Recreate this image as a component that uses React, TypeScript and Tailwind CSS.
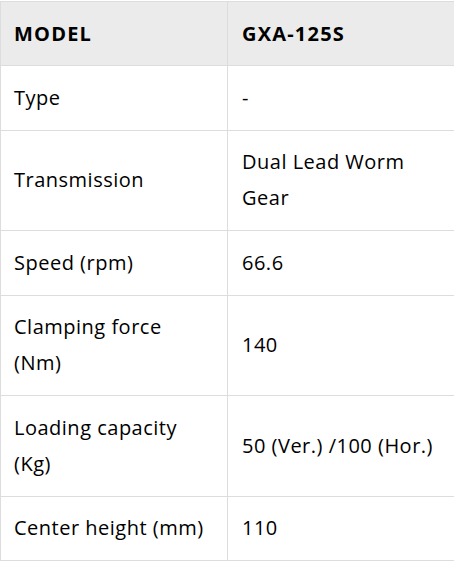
import React from "react";

const rows: [string, string][] = [
  ["Type", "-"],
  ["Transmission", "Dual Lead Worm Gear"],
  ["Speed (rpm)", "66.6"],
  ["Clamping force (Nm)", "140"],
  ["Loading capacity (Kg)", "50 (Ver.) /100 (Hor.)"],
  ["Center height (mm)", "110"],
];

export default function App() {
  return (
    <div
      className="w-[454px] h-[562px] overflow-hidden bg-white pt-px text-[#000]"
      style={{ fontFamily: '"Open Sans", "Noto Sans", sans-serif' }}
    >
      <table className="w-[460px] border-collapse table-fixed text-[20px] leading-[36px] tracking-[0.5px]">
        <colgroup>
          <col className="w-[227px]" />
          <col />
        </colgroup>
        <thead>
          <tr className="bg-[#ebebeb]">
            <th className="border border-[#dddddd] pl-[13px] pr-[18px] py-[13.6px] text-left font-bold tracking-[1.2px]">MODEL</th>
            <th className="border border-[#dddddd] pl-[14px] pr-[14px] py-[13.6px] text-left font-bold tracking-[1.2px]">GXA-125S</th>
          </tr>
        </thead>
        <tbody>
          {rows.map(([a, b]) => (
            <tr key={a}>
              <td className="border border-[#dddddd] pl-[13px] pr-[18px] py-[13.75px] align-middle">{a}</td>
              <td className="border border-[#dddddd] pl-[14px] pr-[14px] py-[13.75px] align-middle">{b}</td>
            </tr>
          ))}
        </tbody>
      </table>
    </div>
  );
}
